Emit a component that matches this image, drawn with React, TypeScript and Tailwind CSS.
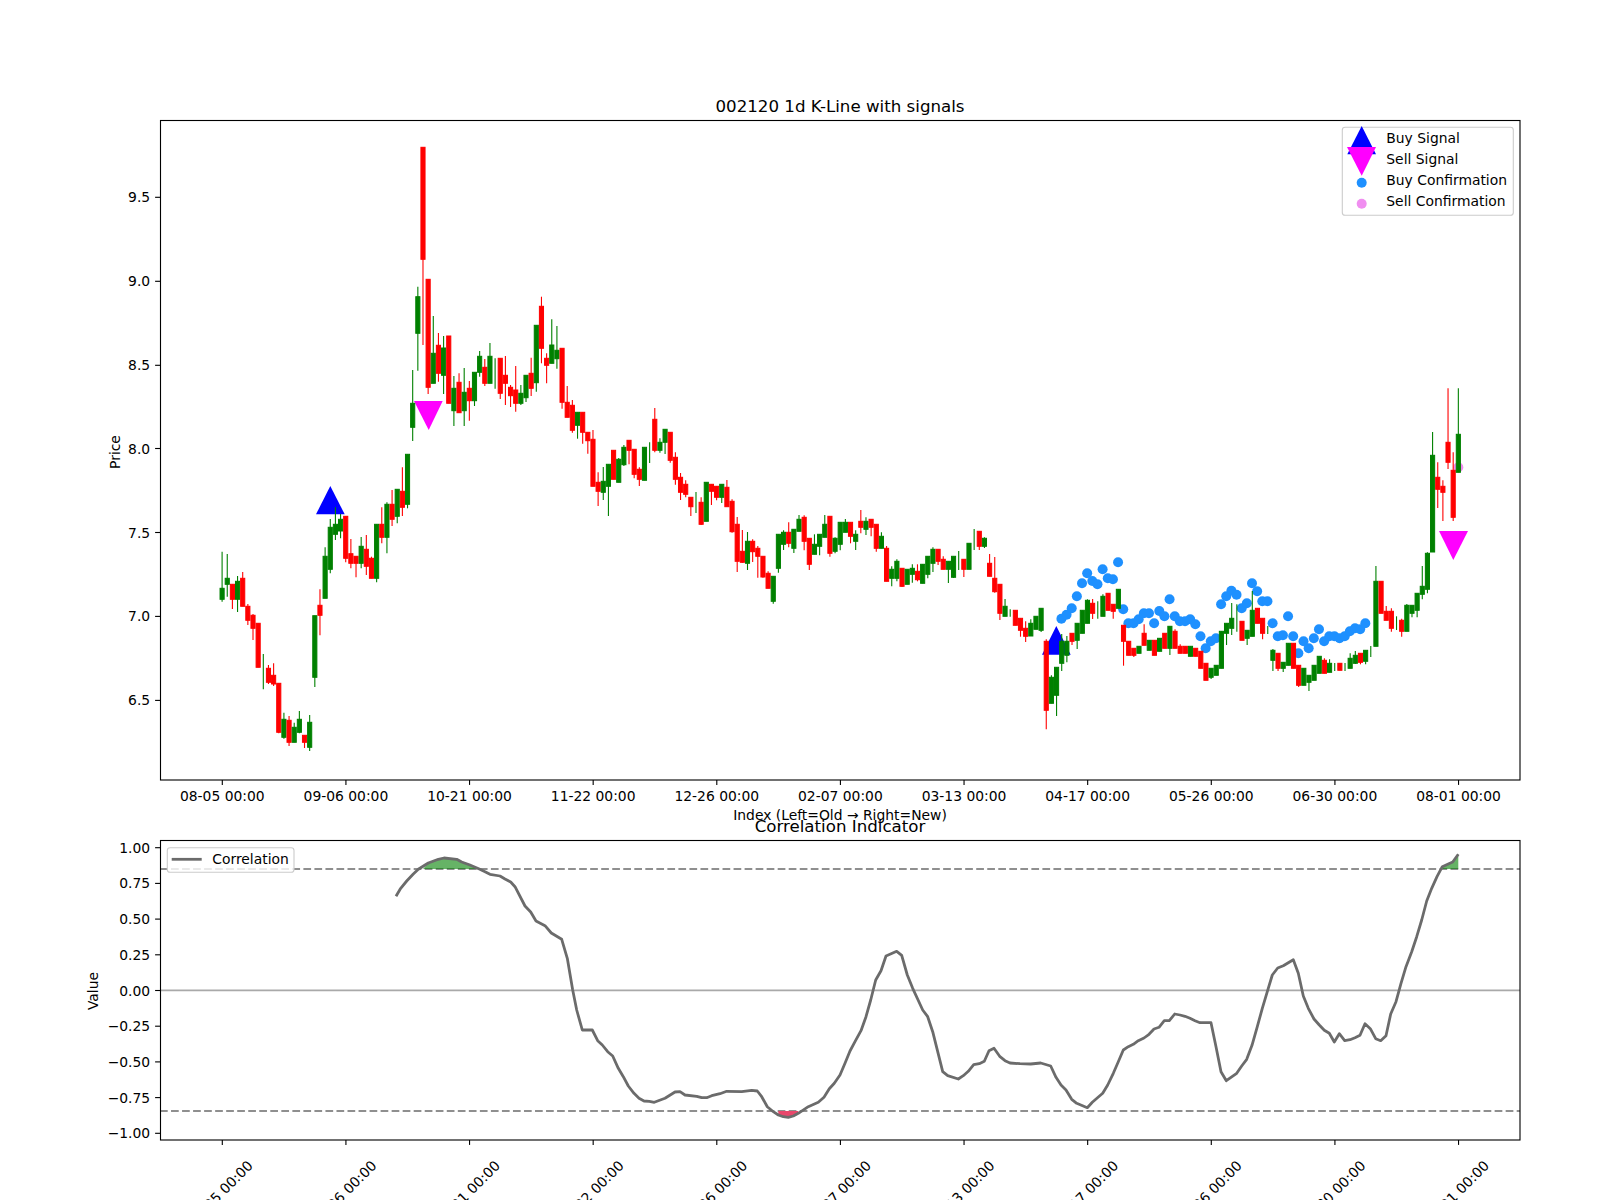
const xOf = (i: number) => 221.8 + 5.151 * i;

const xTicks = ["08-05 00:00", "09-06 00:00", "10-21 00:00", "11-22 00:00", "12-26 00:00", "02-07 00:00", "03-13 00:00", "04-17 00:00", "05-26 00:00", "06-30 00:00", "08-01 00:00"];
const priceTicks = [["9.5", 197.3], ["9.0", 281.3], ["8.5", 365.3], ["8.0", 448.5], ["7.5", 532.5], ["7.0", 616.4], ["6.5", 700.4]] as const;
const corrTicks = ["1.00", "0.75", "0.50", "0.25", "0.00", "−0.25", "−0.50", "−0.75", "−1.00"];

// one row per candle, pixel y: color, wick top, body top, body bottom, wick bottom
type Candle = ["g" | "r", number, number, number, number];
const candles: Candle[] = [
  ["g", 551.7, 588.3, 599.3, 601.7], ["g", 554, 578.3, 584.3, 596.7], ["r", 584.3, 584.3, 599.3, 609], ["g", 576, 581.3, 599.3, 612],
  ["r", 572, 578.3, 606.3, 606.3], ["r", 604, 606.3, 620.3, 625], ["r", 614, 615.3, 628.3, 640], ["r", 623.3, 623.3, 667.3, 667.3],
  ["g", 654, 671, 671, 689.3], ["r", 665, 668.3, 682.3, 684], ["r", 663.3, 675.3, 684, 686], ["r", 683.3, 683.3, 732.3, 733.3],
  ["g", 712.7, 719.3, 737.3, 738.7], ["r", 716, 720.3, 742.3, 746], ["g", 722.7, 727.3, 742.3, 742.3], ["g", 711, 719.3, 732.3, 733.3],
  ["r", 735.3, 735.3, 742.3, 748], ["g", 715, 722.3, 747.3, 751], ["g", 615.7, 615.7, 677.3, 687], ["r", 589.3, 605.3, 615.3, 635.3],
  ["g", 547.3, 556.3, 598.3, 598.3], ["g", 519, 527.3, 569.3, 573.3], ["g", 507.3, 524.3, 534.3, 540], ["g", 514, 519.3, 531, 538.3],
  ["r", 516.3, 516.3, 558.3, 562.3], ["r", 539, 553.7, 563.3, 568.3], ["r", 556.3, 556.3, 563.3, 577.3], ["g", 537, 546.3, 563.3, 568.3],
  ["r", 535, 549.3, 566.3, 575], ["r", 556.7, 558.3, 578.3, 578.3], ["g", 524.3, 524.3, 578.3, 582.3], ["r", 507.3, 524.3, 537.3, 543.3],
  ["g", 502.3, 504.3, 537.3, 553.3], ["r", 490, 504.3, 519.3, 526], ["g", 489.3, 489.3, 516.3, 523.3], ["r", 467.3, 491.3, 507.3, 516],
  ["g", 454.3, 454.3, 504.3, 508.3], ["g", 370, 403.3, 427.3, 441], ["g", 286.7, 296.7, 333.3, 370.7], ["r", 147.3, 147.3, 259.3, 345],
  ["r", 279.3, 279.3, 387.3, 394], ["g", 316, 353.3, 383.3, 383.3], ["r", 333, 345.3, 373.3, 381.7], ["g", 336, 348, 375.3, 394],
  ["r", 336, 336, 403.3, 403.3], ["g", 376, 388.3, 410.7, 426], ["r", 373.3, 382.3, 412.7, 412.7], ["g", 368, 392.3, 410.7, 426],
  ["r", 381, 388.3, 400.7, 420.7], ["g", 372.3, 372.3, 400.7, 406], ["g", 351, 356.3, 372.3, 376.7], ["r", 359, 367.3, 383.3, 386],
  ["g", 343, 356.3, 383.3, 383.3], ["g", 358.3, 373, 373, 388.7], ["r", 358.3, 358.3, 393.3, 399], ["r", 356, 375.3, 383.3, 405],
  ["r", 385, 387.3, 395.7, 407], ["r", 366, 390, 403.3, 411.7], ["g", 385, 393.3, 403.3, 405], ["g", 375.3, 375.3, 397.7, 402],
  ["r", 357.7, 373.3, 388.3, 396], ["g", 325.3, 325.3, 382.7, 391.7], ["r", 296.7, 306.3, 348.3, 363.3], ["r", 353.3, 358.3, 365.3, 383.3],
  ["g", 319.3, 345, 363.3, 363.3], ["g", 326, 350.3, 358.7, 368.7], ["r", 348.3, 348.3, 402.3, 408.7], ["r", 386, 402.3, 417.3, 417.3],
  ["r", 400, 405.3, 430.3, 432.7], ["g", 412.3, 412.3, 425.3, 438.7], ["r", 412.3, 412.3, 432.3, 443.7], ["r", 432.3, 432.3, 440.7, 453.7],
  ["r", 430, 439.3, 486.3, 486.3], ["r", 472.3, 482.3, 491.3, 506], ["g", 467, 481.3, 492.3, 500], ["g", 464.3, 464.3, 486.3, 516],
  ["r", 450.3, 450.3, 479.3, 479.3], ["g", 458, 459.3, 482.3, 482.3], ["g", 445, 447.3, 464.7, 466], ["r", 440.3, 440.3, 450.3, 464.3],
  ["r", 449.3, 449.3, 474.3, 478.3], ["r", 467.3, 469.3, 479.3, 486], ["g", 447.3, 447.3, 480.3, 480.3], ["g", 442.3, 452, 452, 463],
  ["r", 408, 419.3, 450.3, 452.3], ["g", 438.3, 442.3, 450.3, 452.7], ["g", 429.3, 429.3, 442.3, 454], ["r", 432.3, 432.3, 460.3, 462.7],
  ["r", 452.3, 457.3, 479.3, 484.7], ["r", 473, 477.3, 492.3, 500], ["r", 480.3, 484.3, 494.3, 497.3], ["r", 497.3, 497.3, 506.7, 516],
  ["g", 492, 502, 502, 513], ["r", 497.3, 502.3, 524.3, 525], ["g", 482.3, 482.3, 521.3, 521.3], ["r", 484.3, 484.3, 491.3, 505],
  ["r", 486.3, 486.3, 497.3, 500.3], ["g", 484.3, 484.3, 497.3, 503], ["r", 480, 487.3, 506.7, 506.7], ["r", 499.3, 501.3, 531.7, 532.7],
  ["r", 517, 524.3, 561.3, 572], ["r", 530, 551.3, 562.3, 562.7], ["g", 532, 541.3, 563.3, 570], ["r", 539.3, 541.3, 551.7, 562],
  ["r", 546, 548.3, 556.3, 577.7], ["r", 556.3, 556.3, 577, 577.7], ["r", 571.3, 573.3, 588.3, 588.3], ["g", 576.3, 576.3, 601.3, 603.7],
  ["g", 534.3, 534.3, 568.3, 572.7], ["g", 530.3, 532.3, 544.3, 550], ["r", 522.3, 532.3, 543.3, 547.3], ["g", 529.3, 529.3, 548.3, 553],
  ["g", 515, 519.3, 531.3, 531.3], ["r", 515.3, 517.3, 541.3, 550.3], ["r", 538.3, 538.3, 564.3, 570], ["g", 534.3, 544.3, 554.3, 554.3],
  ["g", 534.3, 534.3, 546.3, 555.3], ["g", 515, 524.3, 537.3, 537.3], ["r", 516.3, 516.3, 553.3, 556.7], ["g", 537.3, 538.3, 551.3, 553.3],
  ["g", 522.3, 522.3, 544.3, 550.3], ["g", 519, 522.3, 532.3, 532.3], ["r", 522.3, 522.3, 536.3, 543.3], ["g", 530.3, 534.3, 541.3, 550],
  ["r", 510, 521.3, 527.3, 533.3], ["g", 517.3, 521.3, 529.3, 535], ["r", 519.3, 519.3, 527.3, 536.3], ["r", 524.3, 524.3, 548.3, 551.7],
  ["g", 532.3, 536.3, 548.3, 548.3], ["r", 546, 548.3, 581.3, 581.3], ["g", 566.3, 569.3, 578.3, 586.3], ["g", 559.3, 561.3, 578.3, 581.3],
  ["r", 568.3, 568.3, 586.3, 587], ["g", 569.3, 569.3, 584.3, 584.3], ["g", 564.3, 568.3, 574.3, 582.7], ["r", 564.3, 571.3, 579.7, 581.3],
  ["g", 564.3, 564.3, 583.3, 583.3], ["g", 556.3, 556.3, 574.3, 578.3], ["g", 547.3, 549.3, 563.3, 572], ["r", 549.3, 549.3, 561.3, 565],
  ["r", 556.3, 559.3, 569.3, 569.3], ["g", 561.3, 561.3, 569.3, 583], ["g", 556.3, 556.3, 577.3, 578], ["g", 551, 560, 560, 570],
  ["r", 559.3, 559.3, 569.3, 577], ["g", 543.3, 543.3, 569.3, 569.3], ["g", 529, 540, 540, 550], ["r", 531.3, 531.3, 546.3, 550],
  ["g", 537.3, 538.3, 546.3, 548], ["r", 554, 563.3, 576.3, 576.3], ["r", 557, 578.3, 591.7, 592.7], ["r", 584.3, 584.3, 613.3, 620],
  ["g", 599, 606.3, 616.3, 616.3], ["g", 609.3, 613, 613, 616.7], ["r", 610.3, 610.3, 625.3, 625.3], ["r", 618.3, 618.3, 630.3, 636.7],
  ["r", 621.3, 628.3, 636.3, 642], ["g", 619.3, 623.3, 636, 636], ["g", 616.3, 616.3, 629.3, 629.3], ["g", 608.3, 608.3, 630.3, 632],
  ["r", 639.3, 641.3, 710.3, 729.3], ["g", 675.3, 677.3, 703.3, 703.3], ["g", 667.3, 667.3, 695.3, 716], ["g", 634, 641.3, 663.3, 671],
  ["g", 636, 641.3, 655.3, 662.3], ["r", 633.3, 633.3, 641.3, 645], ["g", 623.3, 623.3, 640.3, 649], ["g", 610.3, 610.3, 633.3, 633.3],
  ["g", 599.3, 600.3, 623.3, 623.3], ["r", 599, 603.3, 613.3, 619], ["g", 601.3, 610, 610, 618.7], ["g", 594.3, 596.3, 616.3, 616.3],
  ["r", 593.3, 593.3, 610.3, 610.3], ["r", 604.3, 604.3, 611.3, 618.7], ["g", 589.3, 589.3, 608.3, 608.3], ["r", 625.3, 625.3, 641.3, 665.7],
  ["r", 641.3, 641.3, 655.3, 655.3], ["r", 648.3, 648.3, 655.3, 657], ["g", 646.3, 646.3, 653.3, 653.3], ["r", 624.3, 633.3, 645.3, 645.3],
  ["g", 640.3, 640.3, 650.3, 650.3], ["r", 640.3, 640.3, 655.3, 655.3], ["g", 638.3, 638.3, 651.3, 651.3], ["r", 633.3, 633.3, 648.3, 648.3],
  ["g", 626.3, 626.3, 648.3, 655], ["r", 629.3, 631.3, 648.3, 648.3], ["r", 644.3, 646.3, 653.3, 653.3], ["r", 646.3, 646.3, 653.3, 653.3],
  ["g", 646.3, 646.3, 656.3, 656.3], ["r", 648.3, 648.3, 656.3, 656.3], ["r", 651.3, 651.3, 668.3, 668.3], ["r", 663.3, 663.3, 680.3, 680.3],
  ["g", 668.3, 668.3, 677.3, 679], ["g", 665.3, 665.3, 675.3, 675.3], ["g", 631.3, 631.3, 668.3, 668.3], ["g", 623.3, 623.3, 633.3, 645],
  ["g", 603, 618.3, 628.3, 635], ["g", 604.3, 618, 618, 631.7], ["r", 621.3, 621.3, 640.3, 640.3], ["g", 630.3, 630.3, 638.3, 645],
  ["g", 591, 610.3, 636.3, 636.3], ["r", 608.3, 608.3, 623.3, 623.3], ["r", 618.3, 618.3, 633.3, 639.3], ["g", 626, 630, 630, 634],
  ["g", 649, 650.3, 660.3, 671], ["r", 653.3, 653.3, 668.3, 671], ["g", 662.3, 662.3, 668.3, 672], ["g", 643.3, 643.3, 665.3, 665.3],
  ["r", 643.3, 643.3, 668.3, 668.3], ["r", 665.3, 665.3, 685.3, 687], ["g", 668.3, 668.3, 685.3, 685.3], ["g", 675.3, 675.3, 682.3, 691],
  ["g", 665.3, 665.3, 680.3, 680.3], ["g", 656.3, 656.3, 673.3, 673.3], ["r", 658.3, 660.3, 673.3, 673.3], ["g", 659.3, 663.3, 672.3, 672.3],
  ["g", 663, 667, 667, 671], ["r", 663.3, 663.3, 670.3, 670.3], ["g", 663, 667, 667, 671], ["g", 653.3, 658.3, 668.3, 668.3],
  ["g", 651, 655.3, 663.3, 664], ["r", 653.3, 653.3, 662.3, 664.3], ["g", 650.3, 650.3, 661.3, 664.3], ["g", 646, 651, 651, 657],
  ["g", 566, 581.3, 646.3, 646.3], ["r", 581.3, 581.3, 613.3, 613.3], ["r", 606, 611.3, 620.3, 620.3], ["r", 608.3, 611.3, 628.3, 631.7],
  ["g", 616.3, 623, 623, 630], ["r", 618.7, 620.3, 631.3, 636.7], ["g", 604, 605.3, 631.3, 631.3], ["g", 605.3, 605.3, 613.3, 617.3],
  ["g", 593.3, 593.3, 610.3, 617.3], ["g", 566, 586.3, 594.3, 599.3], ["g", 552.3, 553.3, 589.3, 593.3], ["g", 432, 455.3, 552, 552],
  ["r", 462.3, 477.3, 489.3, 508], ["r", 480.3, 486.3, 492.3, 521], ["r", 388.3, 442.3, 462.3, 469], ["r", 452.3, 470.3, 517.3, 521],
  ["g", 388.3, 434.3, 472.3, 472.3],
];

// buy confirmation dots start at candle 163
const confirmDots = [
  618.7, 614.7, 608.3, 596.3, 583.3, 573.3, 581, 584.3, 569.3, 578.3, 579.3, 562.3, 609.3, 623.3, 623.3, 619.3, 613.3, 613.3, 623.3, 611,
  616.3, 599.3, 616.3, 621.3, 621.3, 619.3, 624.3, 636.3, 648.3, 641.3, 638.3, 604.3, 596.3, 590.7, 594.7, 608.3, 603.3, 583.3, 591.3, 601.3,
  601.3, 623.3, 636.3, 635.3, 616.3, 636.3, 653.3, 641.3, 648.3, 638.3, 629.3, 641.3, 636.3, 636.3, 638.3, 636.3, 631.3, 628.3, 629.3, 623.3,
];

const corrLine = "396,896.3 400.7,888.3 406.7,881 413.3,874 418.3,869.3 428.3,863 438.3,859.3 444,858 456.7,859.3 461.7,862 469.3,864.7 479.3,869 485,871.7 490,874.3 500,876 505,879 510.7,882 515,886.7 525,906 530.7,912 536,921 545,925.7 551.3,933 561.7,939.3 567.3,958.3 572.7,990 576.7,1010 582.3,1030 592.3,1030 597.7,1040.7 602.3,1045 607.7,1051.7 612.7,1056 618.3,1068.3 623.3,1076.7 628.3,1086 634,1093.3 639,1098.3 644,1101 649.3,1101.3 654.3,1102.3 665,1098.3 675,1092 680,1091.7 685,1095 696.7,1096.3 701.7,1097.7 706.7,1097.7 711.7,1095.7 720,1093.7 726.7,1091.3 741.7,1091.7 751.7,1090.3 757.3,1091 761.7,1096.7 767.3,1106.7 773.3,1111.7 778.3,1115 783.3,1116.7 788.3,1117.3 793.3,1116 798.3,1113.3 808.3,1106.7 818.3,1102.3 824,1097.3 829.3,1088.7 834.3,1083.3 840,1075 845,1063.3 850,1051 855,1041.7 861,1030.7 866,1016.7 870.7,1000 875.7,980 881,970.7 886,956 896.7,951.3 901.7,955.3 907.3,975 912.7,988.3 922.7,1010 927.7,1016.7 932.7,1031.7 942.7,1071.7 947.7,1075.7 958.3,1079 963.3,1075.7 968.3,1071.3 973.7,1064.7 979.3,1063.7 984.3,1061.3 989,1050.7 994,1048.3 1000,1056.7 1005,1060.7 1010,1063 1020,1063.7 1030.7,1064 1040.7,1063 1050.7,1066 1056,1077.3 1061,1085 1066,1090 1071.7,1099.3 1076.7,1103.3 1087.3,1107.7 1092.3,1102.3 1102.7,1093.3 1107.7,1085 1113.3,1073.3 1118.3,1061.7 1123.3,1050 1128.3,1046.7 1133.3,1044.3 1138.3,1040.7 1144,1038 1149,1034.3 1154,1029 1159,1027.3 1164.3,1020.7 1169.3,1020.7 1174.7,1014 1180,1015 1185,1016.3 1190,1018.3 1195,1020.7 1200,1022.7 1211,1022.7 1216,1046.7 1221,1071.7 1226.3,1080.7 1236.7,1073.3 1241.7,1066 1246.7,1059.3 1252,1045.3 1257.3,1026.7 1262.3,1008.3 1267.3,991.7 1272.3,975 1277.7,968 1283.3,965.7 1293.3,959.7 1298.3,973.3 1303.3,996 1308.3,1008.3 1314,1019 1319.3,1025 1324.3,1030.3 1329.3,1033.3 1334.3,1042 1339.3,1033.7 1344.7,1040.7 1350,1039.7 1355,1037.7 1360,1035.3 1365,1023.7 1370.3,1028.7 1375.7,1038.7 1380.7,1040.7 1386,1035.7 1390.7,1014 1396,1001.7 1401,983.3 1406,966.7 1411.7,951.7 1416.7,936.7 1421.7,920 1426.7,901 1431.7,888.3 1437,876.7 1442.3,866.7 1447.7,864.3 1452.7,862 1458.3,854.3";

const tickX = xTicks.map((_, i) => xOf(i * 24) + 0.5);

function KLineChart() {
  return (
    <svg width={1600} height={820} viewBox="0 0 1600 820" className="overflow-visible">
      {/* signal markers sit under the candles */}
      <polygon points="330.3,486 344.7,514.3 316,514.3" fill="#0000ff" />
      <polygon points="1056.3,626 1070.7,654.7 1042,654.7" fill="#0000ff" />
      <polygon points="414,401 442.7,401 428.7,430" fill="#ff00ff" />
      <polygon points="1439,531 1468,531 1453.3,560" fill="#ff00ff" />
      {confirmDots.map((y, i) => (
        <circle key={i} cx={xOf(i + 163)} cy={y} r={5} fill="#1e90ff" />
      ))}
      <circle cx={1458.3} cy={467.3} r={5} fill="#ee82ee" fillOpacity={0.9} />

      {candles.map(([c, wt, bt, bb, wb], i) => {
        const color = c === "g" ? "#008000" : "#ff0000";
        const x = xOf(i) + 0.3;
        return (
          <g key={i}>
            <line x1={x} x2={x} y1={wt} y2={wb} stroke={color} strokeWidth={1.1} />
            {bb > bt && <rect x={x - 2.06} y={bt} width={4.12} height={bb - bt} fill={color} stroke={color} strokeWidth={1} />}
          </g>
        );
      })}

      <rect x={160.5} y={120.5} width={1359.5} height={659.5} fill="none" stroke="#000" strokeWidth={1.11} />
      {tickX.map((x, i) => (
        <g key={i}>
          <line x1={x} x2={x} y1={780} y2={784.9} stroke="#000" strokeWidth={1.11} />
          <text x={x} y={801} textAnchor="middle" className="text-[13.89px]">{xTicks[i]}</text>
        </g>
      ))}
      {priceTicks.map(([label, y]) => (
        <g key={label}>
          <line x1={155.1} x2={160} y1={y} y2={y} stroke="#000" strokeWidth={1.11} />
          <text x={150.2} y={y + 5} textAnchor="end" className="text-[13.89px]">{label}</text>
        </g>
      ))}

      <text x={840} y={111.7} textAnchor="middle" className="text-[16.67px]">002120 1d K-Line with signals</text>
      <text x={840} y={820} textAnchor="middle" className="text-[13.89px]">Index (Left=Old → Right=New)</text>
      <text x={120} y={452} textAnchor="middle" transform="rotate(-90 120 452)" className="text-[13.89px]">Price</text>

      <rect x={1342.3} y={127.3} width={171} height={88} rx={2.8} fill="#fff" fillOpacity={0.8} stroke="#cccccc" strokeWidth={1.11} />
      <polygon points="1361.7,126 1376,154.3 1347.3,154.3" fill="#0000ff" />
      <polygon points="1347,147 1376,147 1361.7,175.7" fill="#ff00ff" />
      <circle cx={1361.7} cy={182.7} r={5} fill="#1e90ff" />
      <circle cx={1361.7} cy={203.7} r={5} fill="#ee82ee" fillOpacity={0.9} />
      <text x={1386.3} y={143} className="text-[13.89px]">Buy Signal</text>
      <text x={1386.3} y={164} className="text-[13.89px]">Sell Signal</text>
      <text x={1386.3} y={185} className="text-[13.89px]">Buy Confirmation</text>
      <text x={1386.3} y={206} className="text-[13.89px]">Sell Confirmation</text>
    </svg>
  );
}

function CorrelationChart() {
  return (
    <svg width={1600} height={380} viewBox="0 820 1600 380" className="overflow-visible">
      <line x1={160} x2={1520} y1={990.4} y2={990.4} stroke="#a9a9a9" strokeWidth={1.7} />
      <line x1={160} x2={1520} y1={869} y2={869} stroke="#8f8f8f" strokeWidth={2} strokeDasharray="7.7 3.33" />
      <line x1={160} x2={1520} y1={1111} y2={1111} stroke="#8f8f8f" strokeWidth={2} strokeDasharray="7.7 3.33" />

      <polygon points="423,869 428.3,863 438.3,859.3 444,858 456.7,859.3 461.7,862 469.3,864.7 476,868 476,869" fill="#008000" fillOpacity={0.6} />
      <polygon points="1442.3,869 1442.3,866.7 1447.7,864.3 1452.7,862 1458.3,854.3 1458.3,869" fill="#008000" fillOpacity={0.6} />
      <polygon points="778.3,1111 778.3,1115 783.3,1116.7 788.3,1117.3 793.3,1116 798.3,1113.3 798.3,1111" fill="#e8476b" />
      <polyline points={corrLine} fill="none" stroke="#6b6b6b" strokeWidth={2.78} strokeLinejoin="round" />

      <rect x={160.5} y={840.5} width={1359.5} height={299.5} fill="none" stroke="#000" strokeWidth={1.11} />
      {tickX.map((x, i) => (
        <g key={i}>
          <line x1={x} x2={x} y1={1140} y2={1144.9} stroke="#000" strokeWidth={1.11} />
          <text x={x - 2} y={1198} textAnchor="middle" transform={`rotate(-45 ${x - 2} 1193)`} className="text-[13.89px]">{xTicks[i]}</text>
        </g>
      ))}
      {corrTicks.map((label, i) => {
        const y = 847.7 + 35.7 * i;
        return (
          <g key={label}>
            <line x1={155.1} x2={160} y1={y} y2={y} stroke="#000" strokeWidth={1.11} />
            <text x={150.2} y={y + 5} textAnchor="end" className="text-[13.89px]">{label}</text>
          </g>
        );
      })}

      <text x={840} y={831.7} textAnchor="middle" className="text-[16.67px]">Correlation Indicator</text>
      <text x={98} y={991} textAnchor="middle" transform="rotate(-90 98 991)" className="text-[13.89px]">Value</text>

      <rect x={167.3} y={847.7} width={126.7} height={24.6} rx={2.8} fill="#fff" fillOpacity={0.8} stroke="#cccccc" strokeWidth={1.11} />
      <line x1={171.7} x2={201.7} y1={859.3} y2={859.3} stroke="#6b6b6b" strokeWidth={2.78} />
      <text x={212.3} y={864} className="text-[13.89px]">Correlation</text>
    </svg>
  );
}

export default function App() {
  return (
    <div className="flex h-[1200px] w-[1600px] flex-col overflow-hidden bg-white font-['DejaVu_Sans',sans-serif]">
      <KLineChart />
      <CorrelationChart />
    </div>
  );
}
